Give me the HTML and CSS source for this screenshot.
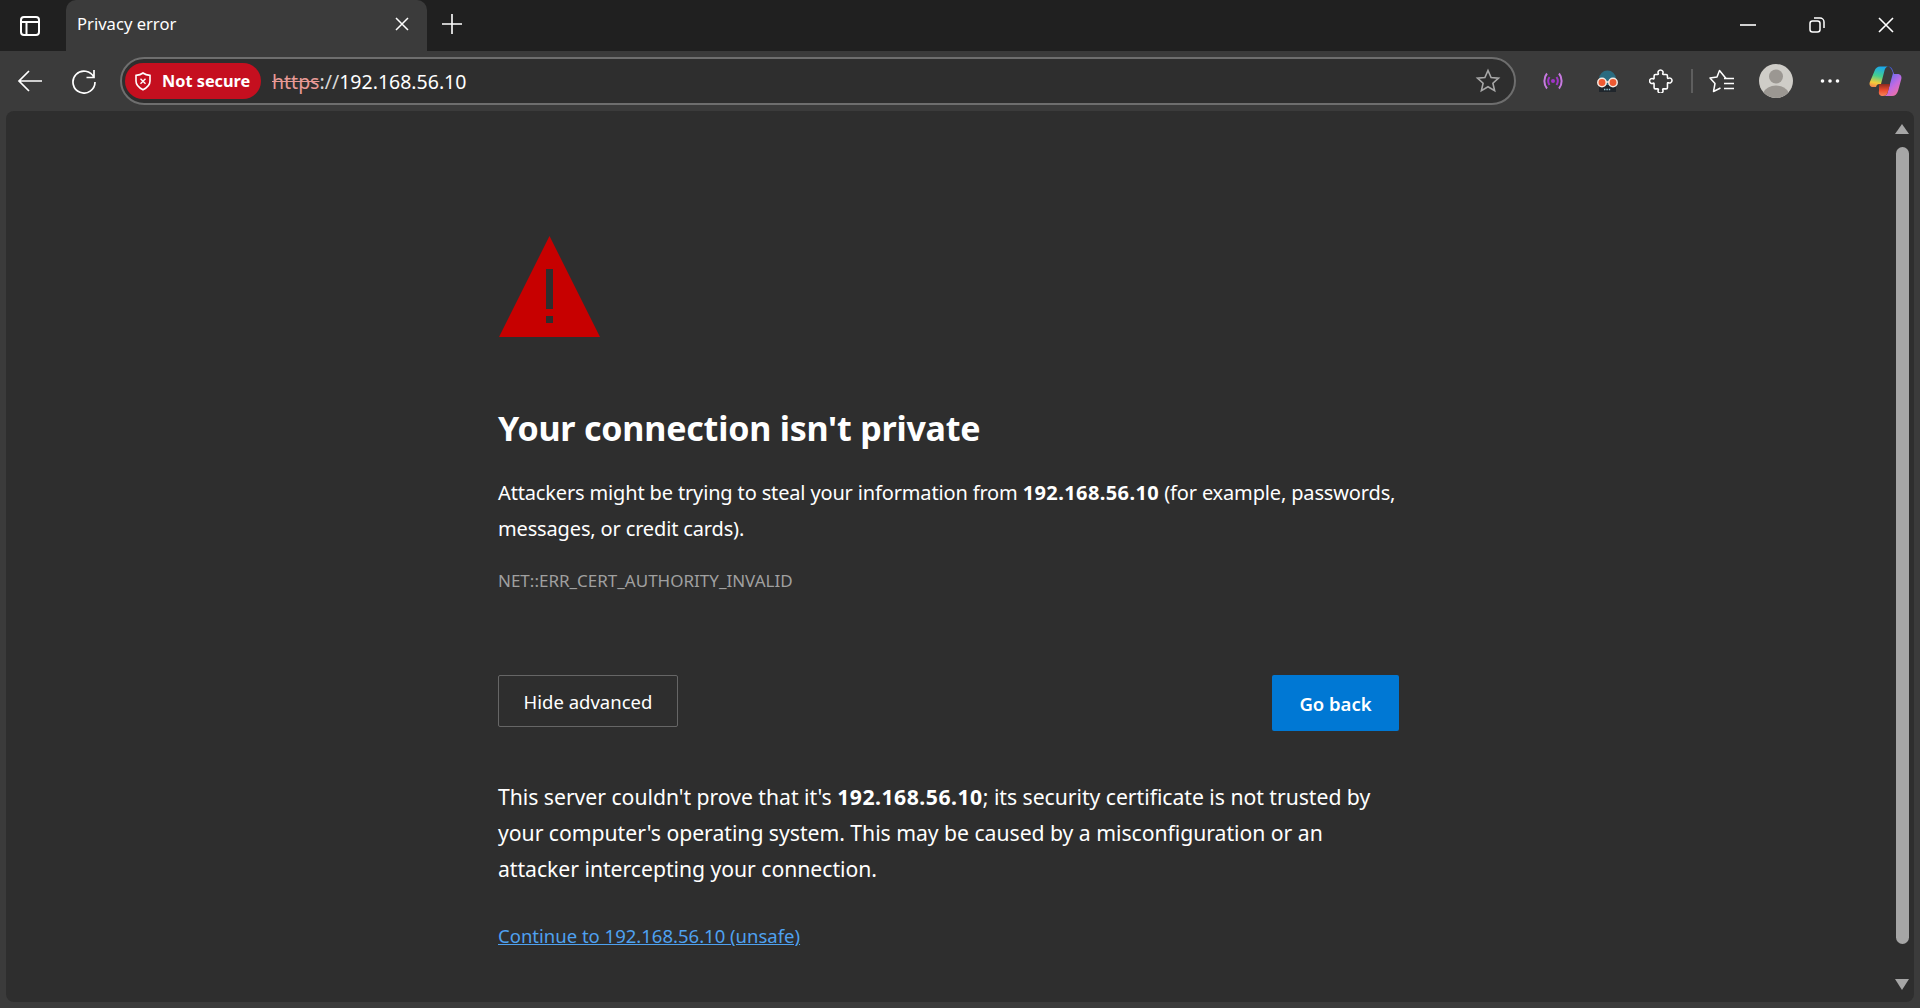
FILE: index.html
```html
<!DOCTYPE html>
<html lang="en">
<head>
    <meta charset="UTF-8">
    <title>Privacy error</title>
    <link rel="stylesheet" href="styles.css">
</head>
<body>
    <div class="tabstrip">
        <div class="sidebar-btn">
            <svg width="22" height="22" viewBox="0 0 22 22" fill="none" stroke="#fff" stroke-width="2"><rect x="2" y="2" width="18" height="18" rx="3"/><path d="M2 7h18M7.500 7v13"/></svg>
        </div>
        <div class="tab">
            <span class="tab-title">Privacy error</span>
            <svg class="tab-close" width="14" height="14" viewBox="0 0 14 14" stroke="#fff" stroke-width="1.500"><path d="M1 1l12 12M13 1L1 13"/></svg>
        </div>
        <svg class="new-tab" width="22" height="22" viewBox="0 0 22 22" stroke="#fff" stroke-width="1.600"><path d="M11 1v20M1 11h20"/></svg>
        <div class="window-controls">
            <svg width="16" height="16" viewBox="0 0 16 16" stroke="#fff" stroke-width="1.600"><path d="M0 8h16"/></svg>
            <svg width="16" height="16" viewBox="0 0 16 16" fill="none" stroke="#fff" stroke-width="1.500"><rect x="1" y="4" width="10" height="11" rx="2.500"/><path d="M5 1h6a4 4 0 0 1 4 4v6"/></svg>
            <svg width="16" height="16" viewBox="0 0 16 16" stroke="#fff" stroke-width="1.600"><path d="M1 1l14 14M15 1L1 15"/></svg>
        </div>
    </div>

    <div class="toolbar">
        <svg class="nav-icon" width="26" height="26" viewBox="0 0 26 26" fill="none" stroke="#fff" stroke-width="1.700"><path d="M25 13H2M12 3L2 13l10 10"/></svg>
        <svg class="nav-icon" width="26" height="26" viewBox="0 0 26 26" fill="none" stroke="#fff" stroke-width="1.700"><path d="M23 2v7.500h-7.500M23 9.500A11 11 0 1 0 24 14"/></svg>
        <div class="address-bar">
            <div class="not-secure">
                <svg width="16" height="19" viewBox="0 0 16 19" fill="none" stroke="#fff" stroke-width="1.600"><path d="M8 1c1.900 1.500 4 2.200 7 2.400v5.600c0 4-3 6.800-7 8.800-4-2-7-4.800-7-8.800V3.400c3-.2 5.100-.9 7-2.400z"/><path d="M5.500 6.800l5 5M10.500 6.800l-5 5" stroke-width="1.400"/></svg>
                <span>Not secure</span>
            </div>
            <div class="url"><span class="scheme">https</span><span class="sep">://</span>192.168.56.10</div>
            <svg class="fav-star" width="26" height="26" viewBox="0 0 26 26" fill="none" stroke="#a8a8a8" stroke-width="1.600"><path d="M13 2.500l3.100 7 7.400.7-5.600 5 1.700 7.400-6.600-3.900-6.600 3.900 1.700-7.400-5.600-5 7.400-.7z"/></svg>
        </div>
        <div class="toolbar-icons">
            <div class="slot">
                <svg width="22" height="18" viewBox="0 0 22 18" fill="none" stroke-width="2"><path d="M5 1.500C1.500 5.500 1.500 12.500 5 16.500" stroke="#c77ae0"/><path d="M17 1.500c3.500 4 3.500 11 0 15" stroke="#c77ae0"/><path d="M7.500 5c-1.700 2.500-1.700 5.500 0 8M14.500 5c1.700 2.500 1.700 5.500 0 8" stroke="#a035c8"/><circle cx="11" cy="9" r="2" fill="#a035c8" stroke="none"/></svg>
            </div>
            <div class="slot">
                <svg width="23" height="23" viewBox="0 0 23 23"><path d="M3 22V9a8.500 8.500 0 0 1 17 0v13z" fill="#2a6b80"/><path d="M3 15h17v7H3z" fill="#20262c"/><path d="M8 19.500h7" stroke="#8cc4d4" stroke-width="1.600" stroke-dasharray="1.400 1"/><path d="M8 12h7" stroke="#f4e6dc" stroke-width="1.500"/><circle cx="6" cy="12.500" r="4.200" fill="#ee5a32" stroke="#f6ebe3" stroke-width="1.500"/><circle cx="17" cy="12.500" r="4.200" fill="#ee5a32" stroke="#f6ebe3" stroke-width="1.500"/></svg>
            </div>
            <div class="slot">
                <svg width="24" height="24" viewBox="0 0 25 26" fill="none" stroke="#fff" stroke-width="1.700" stroke-linejoin="round"><path d="M6.500 6H9c.6 0 .8-.5.6-1a2.700 2.700 0 1 1 4.800 0c-.2.5 0 1 .6 1h3a1.500 1.500 0 0 1 1.500 1.500v2c0 .6.500.8 1 .6a2.700 2.700 0 1 1 0 4.800c-.5-.2-1 0-1 .6v4.500a1.500 1.500 0 0 1-1.500 1.500h-3c-.6 0-.8.5-.6 1a2.700 2.700 0 1 1-4.800 0c.2-.5 0-1-.6-1H6.500A1.500 1.500 0 0 1 5 20v-4c0-.6-.5-.8-1-.6a2.700 2.700 0 1 1 0-4.800c.5.2 1 0 1-.6V7.500A1.500 1.500 0 0 1 6.500 6z"/></svg>
            </div>
            <div class="toolbar-divider"></div>
            <div class="slot">
                <svg width="26" height="24" viewBox="0 0 26 24" fill="none" stroke="#fff" stroke-width="1.500" stroke-linejoin="round"><path d="M17 9.500L10.500 1.500 8 8 1 9l5 5.500L4.500 22.500l7-3.500"/><path d="M15 9.500h10M15 14.500h10M15 19.500h10"/></svg>
            </div>
            <div class="slot">
                <svg width="34" height="34" viewBox="0 0 34 34"><circle cx="17" cy="17" r="17" fill="#cfcdc8"/><circle cx="17" cy="12.500" r="7" fill="#9b9792"/><path d="M4.500 28.500a13 9.500 0 0 1 25 0A17 17 0 0 1 4.500 28.500z" fill="#9b9792"/></svg>
            </div>
            <div class="slot">
                <svg width="20" height="6" viewBox="0 0 20 6" fill="#fff"><circle cx="2.500" cy="3" r="1.800"/><circle cx="10" cy="3" r="1.800"/><circle cx="17.500" cy="3" r="1.800"/></svg>
            </div>
            <div class="slot copilot">
                <svg width="33" height="31" viewBox="0 0 33 31">
                    <defs>
                        <linearGradient id="copilotA" x1="0.500" y1="0" x2="0.300" y2="1"><stop offset="0" stop-color="#1ba8ea"/><stop offset="0.450" stop-color="#45d08e"/><stop offset="0.800" stop-color="#f5cd3a"/><stop offset="1" stop-color="#f58a4a"/></linearGradient>
                        <linearGradient id="copilotB" x1="0.200" y1="0" x2="0.800" y2="1"><stop offset="0" stop-color="#1e4fd8"/><stop offset="0.350" stop-color="#7a6cf0"/><stop offset="0.650" stop-color="#c46ae0"/><stop offset="1" stop-color="#f4729a"/></linearGradient>
                        <linearGradient id="copilotC" x1="0" y1="0" x2="0" y2="1"><stop offset="0" stop-color="#8a2a20"/><stop offset="0.500" stop-color="#ec4a2c"/><stop offset="1" stop-color="#f7845a"/></linearGradient>
                    </defs>
                    <path d="M11 0.500h8c-2 .5-3 2-3.500 4L12 18h-1.500c-2 0-3 1-3.500 3H4c-2.500 0-4-2-3.300-4.500L5.500 5c1-3 3-4.500 5.500-4.500z" fill="url(#copilotA)"/>
                    <path d="M19 0.500c2.500 0 4 1.500 4.800 4L25 8h3.500c3 0 4.500 2.200 3.800 5L29 25c-1 3-3 5-6 5h-9c2 0 4-1 4.500-3L24 7c-1-3-2.500-6-5-6.500z" fill="url(#copilotB)"/>
                    <path d="M10 18h11l-2.500 9c-.7 2-2.500 3-4.500 3-3 0-4.800-2-4-5z" fill="url(#copilotC)"/>
                </svg>
            </div>
        </div>
    </div>

    <div class="content">
        <main class="error-page">
            <svg class="warning" width="102" height="102" viewBox="0 0 102 102"><path d="M50.500 0L101 101H0z" fill="#c70000"/><path d="M47 33h7v40h-7zM47 80h7v7h-7z" fill="#2e2e2e"/></svg>
            <h1>Your connection isn't private</h1>
            <p class="lead">Attackers might be trying to steal your information from <strong>192.168.56.10</strong> (for example, passwords,<br>messages, or credit cards).</p>
            <p class="error-code">NET::ERR_CERT_AUTHORITY_INVALID</p>
            <div class="actions">
                <button class="btn-advanced">Hide advanced</button>
                <button class="btn-back">Go back</button>
            </div>
            <p class="details">This server couldn't prove that it's <strong>192.168.56.10</strong>; its security certificate is not trusted by<br>your computer's operating system. This may be caused by a misconfiguration or an<br>attacker intercepting your connection.</p>
            <a class="proceed" href="#">Continue to 192.168.56.10 (unsafe)</a>
        </main>
        <div class="scrollbar">
            <div class="arrow-up"></div>
            <div class="thumb"></div>
            <div class="arrow-down"></div>
        </div>
    </div>
</body>
</html>
```

FILE: styles.css
```css
* {
    box-sizing: border-box;
}

html, body {
    height: 100%;
}

body {
    margin: 0;
    display: flex;
    flex-direction: column;
    overflow: hidden;
    background-color: #3b3b3b;
    font-family: 'Noto Sans', 'Open Sans', sans-serif;
    color: #fff;
}

.tabstrip {
    height: 51px;
    flex: none;
    display: flex;
    align-items: center;
    background-color: #202020;
}

.sidebar-btn {
    width: 66px;
    display: flex;
    justify-content: center;
    padding-right: 6px;
}

.tab {
    width: 361px;
    height: 51px;
    display: flex;
    align-items: center;
    justify-content: space-between;
    padding: 0 18px 4px 11px;
    background-color: #3b3b3b;
    border-radius: 10px 10px 0 0;
}

.tab-title {
    font-size: 16.600px;
}

.new-tab {
    margin-left: 14px;
    margin-bottom: 4px;
}

.window-controls {
    margin-left: auto;
    display: flex;
    gap: 53px;
    padding: 0 26px 2px 0;
}

.toolbar {
    height: 60px;
    flex: none;
    display: flex;
    align-items: center;
    padding-left: 17px;
    background-color: #3b3b3b;
}

.nav-icon {
    margin-right: 28px;
}

.nav-icon + .nav-icon {
    margin-right: 23px;
}

.address-bar {
    width: 1396px;
    height: 48px;
    display: flex;
    align-items: center;
    padding: 0 13px 0 3px;
    background-color: #2e2e2e;
    border: 2px solid #6e6e6e;
    border-radius: 24px;
}

.not-secure {
    width: 136px;
    height: 36px;
    flex: none;
    display: flex;
    align-items: center;
    gap: 11px;
    padding-left: 10px;
    background-color: #c50f1f;
    border-radius: 18px;
    font-size: 16.300px;
    font-weight: 700;
}

.url {
    margin-left: 11px;
    font-size: 19.500px;
}

.scheme {
    color: #e89a96;
    text-decoration: line-through;
}

.sep {
    color: #d8d8d8;
}

.fav-star {
    margin-left: auto;
}

.toolbar-icons {
    display: flex;
    align-items: center;
    padding-left: 10px;
}

.slot {
    width: 54px;
    display: flex;
    justify-content: center;
}

.copilot {
    padding-left: 3px;
}

.toolbar-divider {
    width: 2px;
    height: 24px;
    margin: 0 2px 0 3px;
    background-color: #5e5e5e;
}

.content {
    flex: 1;
    min-height: 0;
    display: flex;
    margin: 0 6px 6px;
    background-color: #2e2e2e;
    border-radius: 8px;
}

.error-page {
    flex: 1;
    padding: 125px 0 0 492px;
}

.warning {
    display: block;
    margin-left: 1px;
}

h1 {
    margin: 67px 0 0;
    font-size: 34px;
    line-height: 46px;
    font-weight: 700;
    letter-spacing: -0.2px;
}

.lead, .details {
    margin: 0;
    line-height: 36px;
}

.lead {
    margin-top: 24px;
    font-size: 20px;
    letter-spacing: -0.15px;
}

.lead strong {
    letter-spacing: 0.4px;
}

.error-code {
    margin: 22px 0 0;
    font-size: 17px;
    line-height: 24px;
    color: #a0a0a0;
}

.actions {
    width: 901px;
    display: flex;
    justify-content: space-between;
    align-items: flex-start;
    margin-top: 82px;
}

button {
    font-family: inherit;
    color: #fff;
    border-radius: 2px;
}

.btn-advanced {
    width: 180px;
    height: 52px;
    background-color: transparent;
    border: 1px solid #666;
    font-size: 18.500px;
}

.btn-back {
    width: 127px;
    height: 56px;
    background-color: #0078d4;
    border: none;
    font-size: 18.500px;
    font-weight: 600;
}

.details {
    margin-top: 48px;
    font-size: 21.200px;
    letter-spacing: -0.03px;
}

.details strong {
    letter-spacing: 0.5px;
}

.proceed {
    display: inline-block;
    margin-top: 36px;
    font-size: 18.500px;
    line-height: 26px;
    color: #4ea1f0;
}

.scrollbar {
    width: 20px;
    margin-right: 2px;
    display: flex;
    flex-direction: column;
    align-items: center;
    padding-top: 13px;
}

.arrow-up, .arrow-down {
    width: 0;
    height: 0;
    border-left: 7.500px solid transparent;
    border-right: 7.500px solid transparent;
}

.arrow-up {
    border-bottom: 10px solid #a6a6a6;
}

.arrow-down {
    margin-top: 35px;
    border-top: 11px solid #a6a6a6;
}

.thumb {
    width: 13px;
    height: 797px;
    margin-top: 13px;
    background-color: #a6a6a6;
    border-radius: 7px;
}
```
